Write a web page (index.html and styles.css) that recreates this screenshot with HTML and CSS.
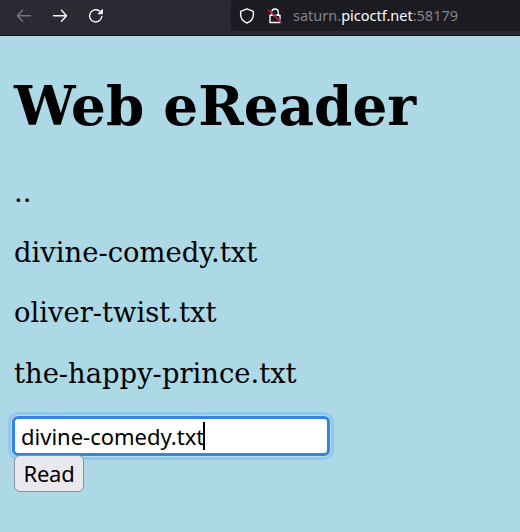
FILE: index.html
```html
<!DOCTYPE html>
<html lang="en">
<head>
<meta charset="utf-8">
<title>Web eReader</title>
<link rel="stylesheet" href="styles.css">
</head>
<body>
<header class="toolbar">
  <nav class="nav">
    <svg class="icon dim" viewBox="0 0 16 16"><path d="M14.500 7.700H1.700M6.500 2.200 1.500 7.700 6.500 13.200"/></svg>
    <svg class="icon" viewBox="0 0 16 16"><path d="M1.500 7.700h12.800M9.500 2.200l5 5.500-5 5.500"/></svg>
    <svg class="icon" viewBox="0 0 16 16"><path d="M13.800 8.500A6.100 6.100 0 1 1 11.500 3"/><path class="solid" d="M14.400 1.800v4h-4z"/></svg>
  </nav>
  <div class="address">
    <svg class="icon" viewBox="0 0 16 16"><path d="M8 .8 14.300 3.300c.5 4.600-.8 10.100-6.300 11.700C2.500 13.400 1.200 7.900 1.700 3.300z"/></svg>
    <svg class="icon" viewBox="0 0 16 16"><path d="M4.700 7V4.300a3.300 3.300 0 0 1 6.600 0V7M3 7.300h10v7.200H3z"/><path class="gap" d="M2.500 1.200l13 12.800"/><path class="slash" d="M1.300 2l13 12.800"/></svg>
    <span class="url">saturn.<b>picoctf.net</b>:58179</span>
  </div>
</header>
<main class="page">
  <h1>Web eReader</h1>
  <p>..</p>
  <p>divine-comedy.txt</p>
  <p>oliver-twist.txt</p>
  <p>the-happy-prince.txt</p>
  <form class="form">
    <div class="field"><span>divine-comedy.txt</span><i class="caret"></i></div>
    <button class="read" type="button">Read</button>
  </form>
</main>
</body>
</html>
```
FILE: styles.css
```css
* { box-sizing: border-box; }
body { margin: 0; height: 532px; overflow: hidden; background: #add8e6; color: #000; }
.toolbar { height: 36px; display: flex; background: #2b2a33; border-bottom: 1px solid #0c0c0d; }
.nav { width: 231px; display: flex; gap: 20px; padding: 8px 16px; }
.icon { flex: none; width: 16px; height: 16px; fill: none; stroke: #fbfbfe; stroke-width: 1.4; stroke-linecap: round; stroke-linejoin: round; }
.dim { stroke: #77767e; }
.solid { fill: #fbfbfe; stroke-width: 1; }
.gap { stroke: #1c1b22; stroke-width: 1; }
.slash { stroke: #e2143f; stroke-width: 1.3; }
.address { flex: 1; height: 31px; display: flex; align-items: center; gap: 12px; padding-left: 8px; background: #1c1b22; border-radius: 4px 0 0 4px; }
.url { margin: -2px 0 0 -2px; font: 14.5px/20px "Noto Sans", sans-serif; color: #85848b; white-space: nowrap; }
.url b { font-weight: 400; color: #fbfbfe; }
.page { padding: 34px 14px 0; font-family: "DejaVu Serif", serif; }
h1 { margin: 0; font-size: 54.8px; line-height: 72px; font-weight: 700; }
p { margin: 0; font-size: 27.4px; line-height: 33px; padding-bottom: 27.4px; }
h1 + p { margin-top: 33.6px; }
.form { font: 22px "Noto Sans", sans-serif; display: flex; flex-direction: column; align-items: flex-start; margin-top: -1.6px; }
.field { width: 318px; height: 40px; margin-left: -2px; border: 3px solid #3584e4; border-radius: 6px; background: #fff; display: flex; align-items: center; padding-left: 6px; box-shadow: 0 0 0 1px #b9dded, 0 0 0 4px #91c9ee; }
.caret { width: 2px; height: 28px; margin: 0 0 0 -1px; background: #000; }
.read { position: relative; width: 70px; height: 37px; margin-top: -1px; border: 1px solid #8f8f9d; border-radius: 6px; background: #e9e9ed; color: #000; font: inherit; letter-spacing: -.3px; padding: 0; }
```
